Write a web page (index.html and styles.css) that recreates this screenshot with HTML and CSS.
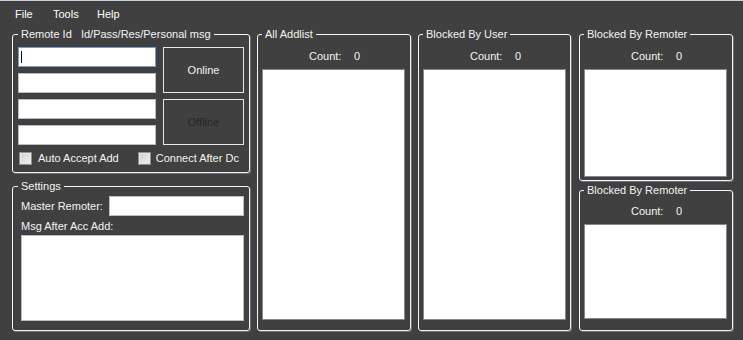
FILE: index.html
```html
<!DOCTYPE html>
<html>
<head>
<meta charset="utf-8">
<link rel="stylesheet" href="styles.css">
</head>
<body>
<div class="window">
  <div class="edge"></div>
  <div class="menu">
    <span class="mi">File</span>
    <span class="mi">Tools</span>
    <span class="mi">Help</span>
  </div>
  <div class="main">
    <div class="col col1">
      <fieldset class="grp g-remote">
        <legend>Remote Id&nbsp;&nbsp;&nbsp;Id/Pass/Res/Personal msg</legend>
        <div class="remote-grid">
          <div class="fields">
            <div class="field focus"><span class="caret"></span></div>
            <div class="field"></div>
            <div class="field"></div>
            <div class="field"></div>
          </div>
          <div class="buttons">
            <div class="btn">Online</div>
            <div class="btn disabled">Offline</div>
          </div>
        </div>
        <div class="checks">
          <label class="chk c1"><span class="box"></span><span>Auto Accept Add</span></label>
          <label class="chk c2"><span class="box"></span><span>Connect After Dc</span></label>
        </div>
      </fieldset>
      <fieldset class="grp g-settings">
        <legend>Settings</legend>
        <div class="master">
          <span class="mlabel">Master Remoter:</span>
          <div class="field mfield"></div>
        </div>
        <div class="msglabel">Msg After Acc Add:</div>
        <div class="textarea"></div>
      </fieldset>
    </div>
    <div class="col col2">
      <fieldset class="grp g-list full">
        <legend>All Addlist</legend>
        <div class="count"><span class="clabel">Count:</span><span>0</span></div>
        <div class="listbox lb-full"></div>
      </fieldset>
    </div>
    <div class="col col3">
      <fieldset class="grp g-list full">
        <legend>Blocked By User</legend>
        <div class="count"><span class="clabel">Count:</span><span>0</span></div>
        <div class="listbox lb-full"></div>
      </fieldset>
    </div>
    <div class="col col4">
      <fieldset class="grp g-list r1">
        <legend>Blocked By Remoter</legend>
        <div class="count"><span class="clabel">Count:</span><span>0</span></div>
        <div class="listbox lb-r1"></div>
      </fieldset>
      <fieldset class="grp g-list r2">
        <legend>Blocked By Remoter</legend>
        <div class="count"><span class="clabel">Count:</span><span>0</span></div>
        <div class="listbox lb-r2"></div>
      </fieldset>
    </div>
  </div>
</div>
</body>
</html>
```

FILE: styles.css
```css
html, body {
  margin: 0;
  padding: 0;
  background: #404040;
}
body {
  font-family: "Liberation Sans", Arial, sans-serif;
  font-size: 11px;
  color: #f4f4f4;
  width: 743px;
  height: 340px;
  overflow: hidden;
}
.edge {
  height: 1px;
  background: #c9ced8;
}
.menu {
  height: 27px;
  line-height: 27px;
  display: grid;
  grid-template-columns: 38px 44px auto;
  padding-left: 15px;
  color: #ffffff;
}
.main {
  display: flex;
  align-items: flex-start;
  padding-left: 12px;
}
.col {
  display: flex;
  flex-direction: column;
}
.col1 { width: 238px; margin-right: 7px; gap: 7px; }
.col2 { width: 154px; margin-right: 7px; }
.col3 { width: 153px; margin-right: 8px; }
.col4 { width: 154px; gap: 3px; }

.grp {
  margin: 0;
  min-width: 0;
  border: 1px solid #f2f4f8;
  border-radius: 3px;
  box-shadow: 1px 1px 0 rgba(190, 200, 220, 0.35);
  padding: 0 5px 0 5px;
}
.grp legend {
  padding: 0 3px;
  line-height: 12px;
  font-size: 11px;
  color: #f4f4f4;
}

/* Remote group */
.g-remote { padding: 7px 5px 7px 5px; }
.remote-grid {
  display: grid;
  grid-template-columns: 138px 81px;
  column-gap: 7px;
}
.fields {
  display: flex;
  flex-direction: column;
  gap: 6px;
}
.field {
  height: 20px;
  box-sizing: border-box;
  background: #ffffff;
  border: 1px solid #b9bcc4;
  position: relative;
}
.field.focus { border-color: #7a9cc8; }
.caret {
  position: absolute;
  left: 2px;
  top: 3px;
  width: 1px;
  height: 12px;
  background: #000;
}
.buttons {
  display: flex;
  flex-direction: column;
  gap: 6px;
}
.btn {
  height: 46px;
  box-sizing: border-box;
  border: 1px solid #e6e6e6;
  display: flex;
  align-items: center;
  justify-content: center;
  color: #f4f4f4;
}
.btn.disabled { color: #262626; }
.checks {
  display: flex;
  margin-top: 7px;
  height: 13px;
  line-height: 13px;
}
.chk {
  display: flex;
  align-items: center;
  gap: 6px;
}
.chk.c1 { margin-left: 1px; }
.chk.c2 { margin-left: 19px; gap: 5px; }
.box {
  width: 13px;
  height: 13px;
  box-sizing: border-box;
  border: 1px solid #8e8f8f;
  background: linear-gradient(135deg, #cfd0d2, #f2f2f2);
  box-shadow: inset 0 0 0 1px #e9e9e9;
}

/* Settings group */
.g-settings { padding: 4px 5px 9px 5px; }
.master {
  display: flex;
  justify-content: space-between;
  height: 20px;
  line-height: 20px;
  padding-left: 3px;
}
.mfield { width: 135px; height: 20px; }
.msglabel {
  margin-top: 4px;
  line-height: 13px;
  padding-left: 3px;
}
.textarea {
  margin-top: 2px;
  margin-left: 3px;
  height: 86px;
  box-sizing: border-box;
  background: #fff;
  border: 1px solid #b9bcc4;
}

/* List groups */
.g-list { padding: 10px 4px 10px 4px; }
.count {
  display: flex;
  line-height: 13px;
  padding-left: 47px;
}
.clabel { width: 45px; }
.listbox {
  margin-top: 6px;
  width: 143px;
  box-sizing: border-box;
  background: #ffffff;
  border: 1px solid #828790;
}
.lb-full { height: 251px; }
.g-list.r1 { padding-bottom: 3px; }
.lb-r1 { height: 108px; }
.g-list.r2 { padding-top: 9px; padding-bottom: 11px; }
.lb-r2 { height: 95px; }
```
